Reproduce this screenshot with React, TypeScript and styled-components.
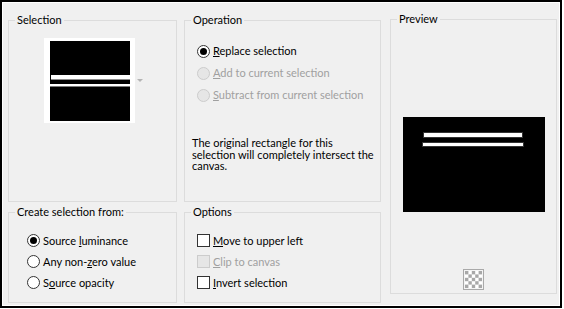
import React from "react";
import styled, { createGlobalStyle } from "styled-components";

const Global = createGlobalStyle`
  html, body { margin: 0; padding: 0; background: #ffffff; }
  body {
    font-family: Lato, "Noto Sans", "DejaVu Sans", sans-serif;
    font-size: 11px;
    color: #000000;
  }
`;

const Frame = styled.div`
  box-sizing: border-box;
  width: 562px;
  height: 308px;
  border: 2px solid #000000;
  box-shadow: inset 0 0 0 1px #ffffff;
  background: #f0f0f0;
  padding: 11px 0 0 6px;
  display: flex;
  align-items: flex-start;
  gap: 9px;
`;

const LeftGrid = styled.div`
  display: grid;
  grid-template-columns: 169px 197px;
  grid-template-rows: 189px 98px;
  column-gap: 7px;
  row-gap: 3px;
`;

const Group = styled.fieldset<{ $h?: number; $w?: number; $shift?: number }>`
  box-sizing: border-box;
  margin: ${(p) => (p.$shift ? `${p.$shift}px 0 0 0` : "0")};
  padding: 0;
  border: 1px solid #dcdcdc;
  min-width: 0;
  ${(p) => (p.$w ? `width: ${p.$w}px;` : "")}
  ${(p) => (p.$h ? `height: ${p.$h}px;` : "")}
`;

const Legend = styled.legend`
  margin-left: 6px;
  padding: 0 2px;
  line-height: 14px;
  font-size: 11px;
`;

const Body = styled.div<{ $pt: number; $pl?: number; $center?: boolean }>`
  display: flex;
  flex-direction: column;
  align-items: ${(p) => (p.$center ? "center" : "flex-start")};
  padding: ${(p) => p.$pt}px 0 0 ${(p) => p.$pl ?? 0}px;
`;

const ThumbRow = styled.div`
  display: flex;
  align-items: center;
  margin-left: 35px;
  gap: 2px;
`;

const Thumb = styled.div`
  background: #ffffff;
  padding: 3px 5px 2px 6px;
  display: flex;
`;

const Options = styled.div<{ $rowH: number; $ml?: number }>`
  display: flex;
  flex-direction: column;
  margin-left: ${(p) => p.$ml ?? 0}px;
  & > * {
    height: ${(p) => p.$rowH}px;
  }
`;

const Row = styled.label<{ $disabled?: boolean }>`
  display: flex;
  align-items: center;
  gap: 3px;
  line-height: 14px;
  color: ${(p) => (p.$disabled ? "#a0a0a0" : "#000000")};
  white-space: nowrap;
`;

const RadioDot = styled.span<{ $checked?: boolean; $disabled?: boolean }>`
  box-sizing: border-box;
  width: 13px;
  height: 13px;
  border-radius: 50%;
  border: 1px solid ${(p) => (p.$disabled ? "#cccccc" : "#333333")};
  background: ${(p) => (p.$disabled ? "#e6e6e6" : "#ffffff")};
  display: flex;
  align-items: center;
  justify-content: center;
  flex: none;
  &::after {
    content: "";
    display: ${(p) => (p.$checked ? "block" : "none")};
    width: 7px;
    height: 7px;
    border-radius: 50%;
    background: #000000;
  }
`;

const CheckBox = styled.span<{ $disabled?: boolean }>`
  box-sizing: border-box;
  width: 13px;
  height: 13px;
  border: 1px solid ${(p) => (p.$disabled ? "#cccccc" : "#333333")};
  background: ${(p) => (p.$disabled ? "#e6e6e6" : "#ffffff")};
  flex: none;
`;

const Key = styled.u`
  text-decoration: underline;
  text-underline-offset: 1px;
`;

const Note = styled.p`
  margin: 31px 0 0 0;
  line-height: 11.5px;
  width: 186px;
`;

const IconSlot = styled.div`
  margin-top: 57px;
  display: flex;
`;

const SelectionThumb = () => (
  <svg width="80" height="80" viewBox="0 0 80 80">
    <rect width="80" height="80" fill="#000" />
    <rect x="1" y="34" width="79" height="4" fill="#fff" />
    <rect x="1" y="38" width="79" height="1" fill="#8a8a8a" />
    <rect x="0" y="43" width="80" height="2" fill="#fff" />
    <rect x="0" y="45" width="80" height="1" fill="#7a7a7a" />
  </svg>
);

const DropArrow = () => (
  <svg width="6" height="4" viewBox="0 0 6 4">
    <path d="M0 0 H6 L3 3 Z" fill="#b4b4b4" />
  </svg>
);

const PreviewImage = () => (
  <svg width="142" height="95" viewBox="0 0 142 95">
    <rect width="142" height="95" fill="#000" />
    <rect x="20" y="15" width="100" height="6" fill="#333" />
    <rect x="21" y="16" width="98" height="4" fill="#fff" />
    <rect x="19" y="25" width="102" height="5" fill="#333" />
    <rect x="20" y="26" width="100" height="3" fill="#fff" />
  </svg>
);

const CheckerIcon = () => {
  const cells: React.ReactNode[] = [];
  for (let r = 0; r < 5; r++) {
    for (let c = 0; c < 5; c++) {
      if ((r + c) % 2 === 0) {
        cells.push(<rect key={`${r}-${c}`} x={2 + c * 3.4} y={2 + r * 3.4} width="3.4" height="3.4" fill="#a8a8a8" />);
      }
    }
  }
  return (
    <svg width="21" height="21" viewBox="0 0 21 21">
      <rect x="0.5" y="0.5" width="20" height="20" fill="#f4f4f4" stroke="#a9a9a9" />
      <rect x="2" y="2" width="17" height="17" fill="#ffffff" />
      {cells}
    </svg>
  );
};

export default function App() {
  return (
    <>
      <Global />
      <Frame>
        <LeftGrid>
          <Group>
            <Legend>Selection</Legend>
            <Body $pt={11}>
              <ThumbRow>
                <Thumb>
                  <SelectionThumb />
                </Thumb>
                <DropArrow />
              </ThumbRow>
            </Body>
          </Group>

          <Group>
            <Legend>Operation</Legend>
            <Body $pt={13} $pl={7}>
              <Options $rowH={22} $ml={5}>
                <Row>
                  <RadioDot $checked />
                  <span><Key>R</Key>eplace selection</span>
                </Row>
                <Row $disabled>
                  <RadioDot $disabled />
                  <span><Key>A</Key>dd to current selection</span>
                </Row>
                <Row $disabled>
                  <RadioDot $disabled />
                  <span><Key>S</Key>ubtract from current selection</span>
                </Row>
              </Options>
              <Note>
                The original rectangle for this selection will completely intersect the canvas.
              </Note>
            </Body>
          </Group>

          <Group>
            <Legend>Create selection from:</Legend>
            <Body $pt={11} $pl={18}>
              <Options $rowH={21}>
                <Row>
                  <RadioDot $checked />
                  <span>Source <Key>l</Key>uminance</span>
                </Row>
                <Row>
                  <RadioDot />
                  <span>Any non-<Key>z</Key>ero value</span>
                </Row>
                <Row>
                  <RadioDot />
                  <span>S<Key>o</Key>urce opacity</span>
                </Row>
              </Options>
            </Body>
          </Group>

          <Group>
            <Legend>Options</Legend>
            <Body $pt={11} $pl={12}>
              <Options $rowH={21}>
                <Row>
                  <CheckBox />
                  <span><Key>M</Key>ove to upper left</span>
                </Row>
                <Row $disabled>
                  <CheckBox $disabled />
                  <span><Key>C</Key>lip to canvas</span>
                </Row>
                <Row>
                  <CheckBox />
                  <span><Key>I</Key>nvert selection</span>
                </Row>
              </Options>
            </Body>
          </Group>
        </LeftGrid>

        <Group $w={167} $h={282} $shift={-1}>
          <Legend>Preview</Legend>
          <Body $pt={91} $center>
            <PreviewImage />
            <IconSlot>
              <CheckerIcon />
            </IconSlot>
          </Body>
        </Group>
      </Frame>
    </>
  );
}
